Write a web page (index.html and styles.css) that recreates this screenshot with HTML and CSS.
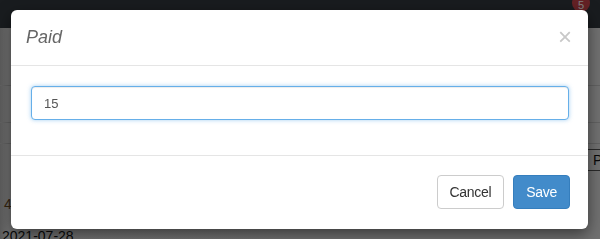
FILE: index.html
```html
<!DOCTYPE html>
<html lang="en">
<head>
    <meta charset="UTF-8">
    <meta name="viewport" content="width=device-width, initial-scale=1.0">
    <title>Paid</title>
    <link rel="stylesheet" href="styles.css">
</head>
<body>

    <!-- Page behind the modal -->
    <div class="navbar">
        <span class="badge">5</span>
    </div>
    <div class="page">
        <div class="row row-head"></div>
        <div class="row row-a"></div>
        <div class="row row-b"></div>
        <div class="row row-c">
            <span class="pay-btn">Pay</span>
        </div>
        <div class="row row-d"><span class="cell-num">4</span></div>
        <div class="row row-e"><span class="cell-date">2021-07-28</span></div>
    </div>

    <div class="backdrop"></div>

    <!-- Paid modal -->
    <div class="modal">
        <div class="modal-header">
            <h4 class="modal-title">Paid</h4>
            <button class="close" type="button">&times;</button>
        </div>
        <div class="modal-body">
            <div class="form-group">
                <input type="text" class="form-control" value="15">
            </div>
        </div>
        <div class="modal-footer">
            <button class="btn btn-default" type="button">Cancel</button>
            <button class="btn btn-primary" type="button">Save</button>
        </div>
    </div>

</body>
</html>
```

FILE: styles.css
```css
html, body {
    height: 239px;
    overflow: hidden;
}

body {
    margin: 0;
    font-family: "Liberation Sans", Arial, sans-serif;
    background-color: #e2e2e2;
}

.navbar {
    height: 28px;
    background-color: #33393f;
    position: relative;
}

.badge {
    position: absolute;
    right: 10px;
    top: -6px;
    width: 18px;
    height: 18px;
    border-radius: 50%;
    background-color: #c9434b;
    color: #fff;
    font-size: 11px;
    line-height: 22px;
    text-align: center;
}

.page {
    background: linear-gradient(to right, #b8b8b8 0, #e4e4e4 8px, #e2e2e2 100%);
}

.row {
    border-top: 1px solid #c4c4c4;
    position: relative;
}

.row-head { height: 57px; border-top: none; }
.row-a { height: 36px; }
.row-b { height: 20px; }
.row-c { height: 50px; }
.row-d { height: 30px; border-top: none; }
.row-e { height: 16px; border-top: none; }

.pay-btn {
    position: absolute;
    left: 586px;
    top: 5px;
    padding: 2px 6px;
    border: 1px solid #555;
    font-size: 14px;
    color: #111;
}

.cell-num {
    position: absolute;
    left: 4px;
    top: 2px;
    font-size: 14px;
    color: #6b4a1e;
}

.cell-date {
    position: absolute;
    left: 2px;
    top: 4px;
    font-size: 14px;
    color: #111;
}

.backdrop {
    position: fixed;
    inset: 0;
    background-color: rgba(0, 0, 0, 0.5);
}

.modal {
    position: absolute;
    left: 11px;
    top: 10px;
    width: 577px;
    background-color: #fff;
    border-radius: 6px;
    box-shadow: 0 5px 15px rgba(0, 0, 0, 0.5);
}

.modal-header {
    display: flex;
    justify-content: space-between;
    align-items: center;
    padding: 15px;
    border-bottom: 1px solid #e5e5e5;
}

.modal-title {
    margin: 0;
    font-size: 18px;
    font-weight: normal;
    font-style: italic;
    line-height: 25px;
    color: #666;
}

.close {
    padding: 0;
    border: 0;
    background: none;
    font-family: "Liberation Sans", Arial, sans-serif;
    font-size: 24px;
    line-height: 20px;
    color: #c8c8c8;
    margin-top: -2px;
    margin-right: 1px;
}

.modal-body {
    padding: 20px 19px 20px 20px;
}

.form-group {
    margin-bottom: 15px;
}

.form-control {
    display: block;
    box-sizing: border-box;
    width: 100%;
    height: 34px;
    padding: 6px 12px;
    font-family: "Liberation Sans", Arial, sans-serif;
    font-size: 13px;
    color: #555;
    border: 1px solid #66afe9;
    border-radius: 4px;
    outline: 0;
    box-shadow: inset 0 1px 1px rgba(0, 0, 0, 0.075), 0 0 4px rgba(102, 175, 233, 0.6);
}

.modal-footer {
    display: flex;
    justify-content: flex-end;
    gap: 9px;
    padding: 19px 18px 20px 20px;
    border-top: 1px solid #e5e5e5;
}

.btn {
    height: 34px;
    padding: 6px 12px;
    font-family: "Liberation Sans", Arial, sans-serif;
    font-size: 14px;
    letter-spacing: -0.3px;
    border-radius: 4px;
    border: 1px solid transparent;
}

.btn-default {
    color: #333;
    background-color: #fff;
    border-color: #ccc;
}

.btn-primary {
    color: #fff;
    background-color: #428bca;
    border-color: #357ebd;
}
```
